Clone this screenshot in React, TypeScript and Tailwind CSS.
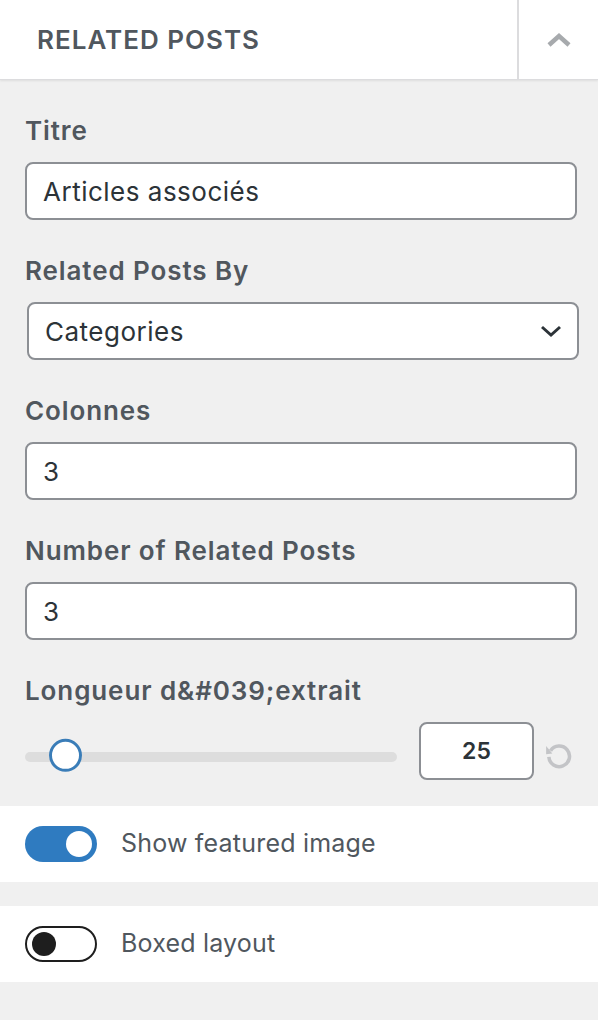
import { useState } from "react";

function Label({ children }: { children: React.ReactNode }) {
  return (
    <label className="h-[30px] flex items-center text-[26px] leading-[30px] font-semibold tracking-[0.9px] text-[#50575e] mt-[2px] mb-[16px]">
      {children}
    </label>
  );
}

function Field({ label, value }: { label: string; value: string }) {
  return (
    <div className="flex flex-col">
      <Label>{label}</Label>
      <div className="h-[58px] bg-white border-2 border-[#8c8f94] rounded-[8px] flex items-center px-[16px] text-[26px] tracking-[0.5px] text-[#2c3338]">
        {value}
      </div>
    </div>
  );
}

function Toggle({ on }: { on: boolean }) {
  return on ? (
    <div className="w-[72px] h-[36px] rounded-full bg-[#2f7bc0] flex items-center justify-end px-[5px]">
      <div className="w-[26px] h-[26px] rounded-full bg-white" />
    </div>
  ) : (
    <div className="w-[72px] h-[36px] rounded-full border-2 border-[#1e1e1e] bg-white flex items-center px-[5px]">
      <div className="w-[24px] h-[24px] rounded-full bg-[#1e1e1e]" />
    </div>
  );
}

export default function App() {
  const [showImage] = useState(true);
  const [boxed] = useState(false);

  return (
    <div className="w-[598px] h-[1020px] bg-[#f0f0f0] font-['Inter',sans-serif] overflow-hidden">
      {/* header */}
      <div className="h-[80px] bg-white flex border-b border-[#dcdcde] shadow-[0_1px_2px_rgba(0,0,0,0.08)]">
        <div className="flex-1 flex items-center pl-[37px] text-[26px] font-semibold tracking-[1px] text-[#50575e]">
          RELATED POSTS
        </div>
        <div className="w-[81px] border-l-2 border-[#dcdcde] flex items-center justify-center">
          <svg width="26" height="16" viewBox="0 0 26 16" fill="none">
            <path d="M3 13 L13 4 L23 13" stroke="#a7aaad" strokeWidth="4.5" />
          </svg>
        </div>
      </div>

      {/* fields */}
      <div className="pl-[25px] pr-[21px] pt-[34px] flex flex-col gap-[34px]">
        <Field label="Titre" value="Articles associés" />
        <div className="flex flex-col">
          <Label>Related Posts By</Label>
          <div className="ml-[2px] -mr-[2px] h-[58px] bg-white border-2 border-[#8c8f94] rounded-[8px] flex items-center justify-between pl-[16px] pr-[14px] text-[26px] tracking-[0.5px] text-[#2c3338]">
            <span>Categories</span>
            <svg width="24" height="16" viewBox="0 0 24 16" fill="none">
              <path d="M3 4 L12 12 L21 4" stroke="#2c3338" strokeWidth="3" />
            </svg>
          </div>
        </div>
        <Field label="Colonnes" value="3" />
        <Field label="Number of Related Posts" value="3" />
        <div className="flex flex-col">
          <Label>Longueur d&amp;#039;extrait</Label>
          <div className="flex items-center h-[58px]">
            <div className="relative mt-[11px] w-[372px] h-[10px] rounded-full bg-[#dddddd]">
              <div className="absolute left-[24px] top-1/2 -translate-y-[55%] w-[33px] h-[33px] rounded-full bg-white border-[3px] border-[#3a7db8]" />
            </div>
            <div className="ml-[22px] w-[115px] h-[58px] bg-white border-2 border-[#8c8f94] rounded-[8px] flex items-center justify-center text-[23px] font-semibold text-[#2c3338]">
              25
            </div>
            <svg className="ml-[8px] mt-[8px]" width="33" height="33" viewBox="0 0 24 24" fill="none">
              <path d="M6.2 8.5 A7.5 7.5 0 1 1 5 13" stroke="#c3c4c7" strokeWidth="2.6" />
              <path d="M3 5 L7.5 10.5 L3 11 Z" fill="#c3c4c7" />
            </svg>
          </div>
        </div>
      </div>

      {/* toggles */}
      <div className="mt-[26px] bg-white h-[76px] flex items-center px-[25px] gap-[24px]">
        <Toggle on={showImage} />
        <span className="text-[25px] tracking-[0.2px] text-[#50575e]">Show featured image</span>
      </div>
      <div className="mt-[24px] bg-white h-[76px] flex items-center px-[25px] gap-[24px]">
        <Toggle on={boxed} />
        <span className="text-[25px] tracking-[0.2px] text-[#50575e]">Boxed layout</span>
      </div>
    </div>
  );
}
